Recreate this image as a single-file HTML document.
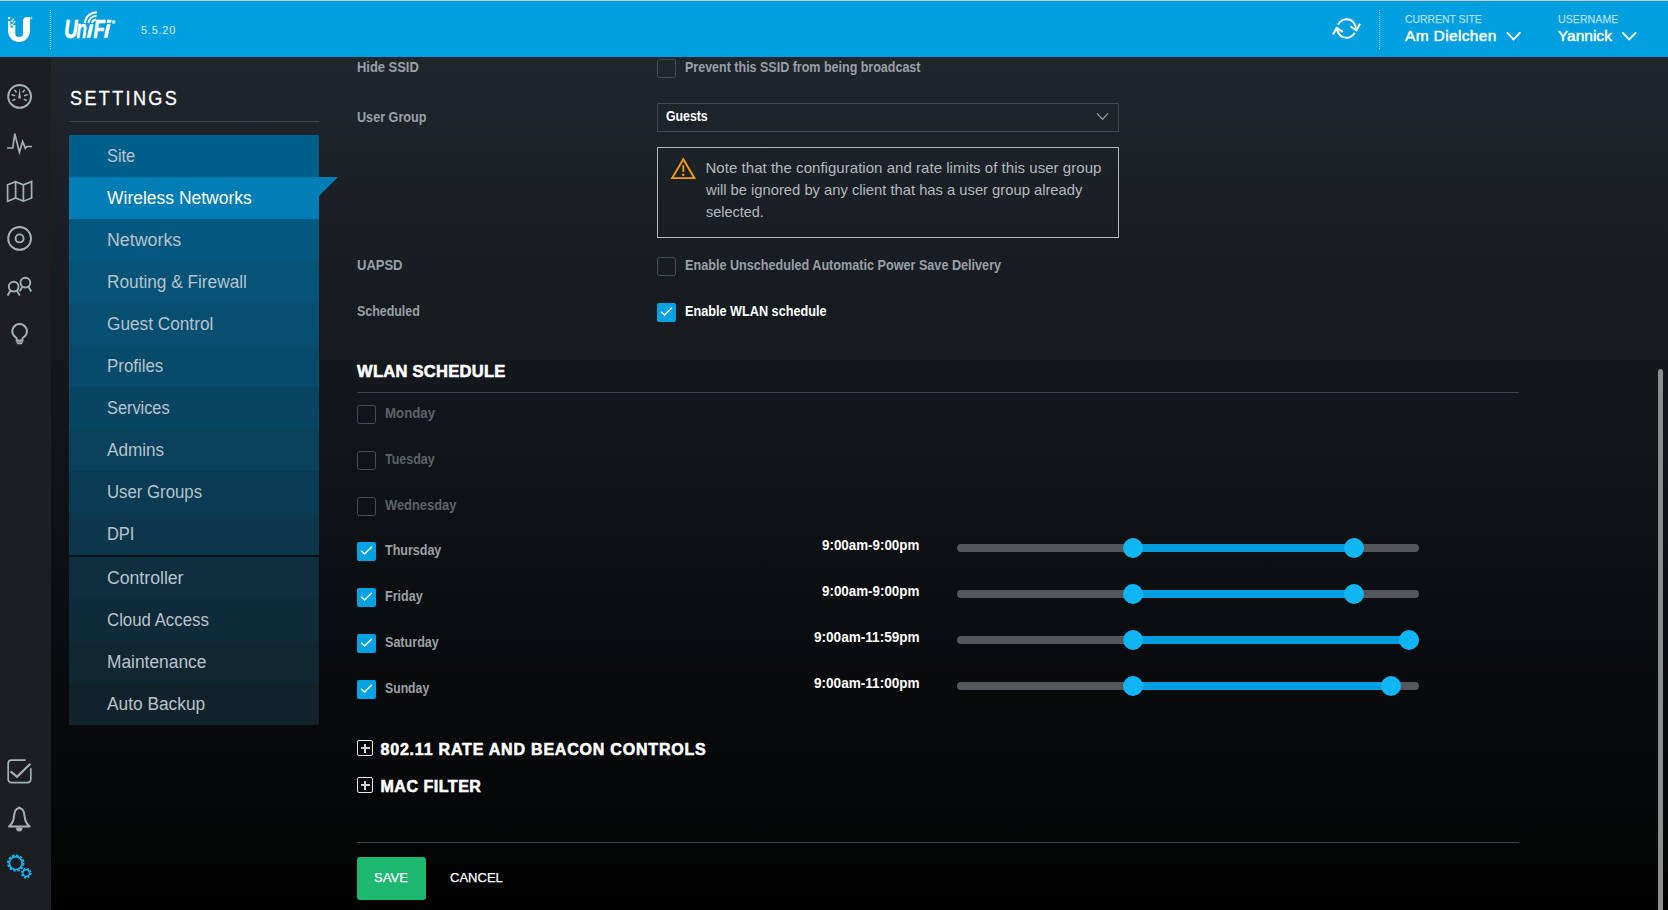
<!DOCTYPE html>
<html><head><meta charset="utf-8"><title>UniFi</title>
<style>
html,body{margin:0;padding:0;width:1668px;height:910px;overflow:hidden;background:#050505;font-family:"Liberation Sans",sans-serif;}
.t{position:absolute;white-space:nowrap;}
#hdr{position:absolute;left:0;top:0;width:1668px;height:57px;background:#00a0e0;border-top:1px solid #c9c9c9;box-sizing:border-box;}
#side{position:absolute;left:0;top:57px;width:51px;height:853px;background:#1c1e22;}
#main{position:absolute;left:51px;top:57px;width:1617px;height:853px;background:linear-gradient(to bottom,#1f262d 0%,#090c0e 70%,#020202 100%);}
.nv{position:absolute;left:69px;width:250px;height:42px;}
.abs{position:absolute;}
.cb{position:absolute;width:17px;height:17px;border:1px solid #424d54;border-radius:2.5px;}
.cbon{position:absolute;width:19px;height:19px;background:#03a2e3;border-radius:2px;}
.hr{position:absolute;height:1px;}
.trk{position:absolute;left:957px;width:462px;height:8px;border-radius:4px;background:#53575c;}
.fill{position:absolute;height:8px;background:#039ee0;}
.knob{position:absolute;width:20px;height:20px;border-radius:10px;background:#10b6f3;}
.cb.dis{border-color:#464c53;}
.plus{position:absolute;width:14px;height:14px;border:1px solid #e8e8e8;border-radius:2px;}
.plus::before{content:"";position:absolute;left:2.5px;top:6.4px;width:9px;height:1.2px;background:#d2d2d2;}
.plus::after{content:"";position:absolute;left:6.4px;top:2.5px;width:1.2px;height:9px;background:#d2d2d2;}

</style></head><body>
<div id="main"></div>
<div id="side"></div>
<div id="hdr"></div>
<div class="nv" style="top:135px;background:#005f88"></div><div class="nv" style="top:177px;background:#007db4"></div><div class="nv" style="top:219px;background:#04587f"></div><div class="nv" style="top:261px;background:#055478"></div><div class="nv" style="top:303px;background:#064f71"></div><div class="nv" style="top:345px;background:#074a6a"></div><div class="nv" style="top:387px;background:#084563"></div><div class="nv" style="top:429px;background:#09405b"></div><div class="nv" style="top:471px;background:#0a3b54"></div><div class="nv" style="top:513px;background:#0b364c"></div><div class="nv" style="top:557px;background:#0e2f40"></div><div class="nv" style="top:599px;background:#0f2a38"></div><div class="nv" style="top:641px;background:#102630"></div><div class="nv" style="top:683px;background:#11222a"></div><div style="position:absolute;left:319px;top:177px;width:0;height:0;border-top:19px solid #007db4;border-right:19px solid transparent"></div>
<div class="hr" style="left:69px;top:121px;width:250px;background:#3d424a"></div>
<div class="abs" style="left:69px;top:555px;width:250px;height:2px;background:#0a1218"></div>

<!-- header icons -->
<svg class="abs" style="left:0;top:0" width="1668" height="57" viewBox="0 0 1668 57">
  <!-- Ubiquiti U -->
  <g fill="#fff">
    <path d="M8,21 H10.5 V27.5 H13 V25 H15.3 V33.2 A3.85,3.85 0 0 0 23,33.2 V21 Q23,17 27.5,17 H30 V31 A11,11 0 0 1 8,31 Z"/>
    <rect x="8" y="17" width="2.2" height="2.2"/>
    <rect x="12.2" y="18.6" width="1.8" height="1.8" opacity=".85"/>
    <rect x="11.2" y="20.4" width="1.6" height="1.6" opacity=".85"/>
    <rect x="13.8" y="20.8" width="1.7" height="1.7" opacity=".85"/>
    <rect x="12.6" y="22.4" width="1.5" height="1.5" opacity=".8"/>
    <rect x="11.2" y="24" width="1.8" height="1.8" opacity=".9"/>
    <rect x="30.4" y="17.2" width="1.8" height="2" opacity=".7"/>
  </g>
  <line x1="50.5" y1="10" x2="50.5" y2="49" stroke="rgba(255,255,255,.6)" stroke-width="1" stroke-dasharray="1 1"/>
  <!-- UniFi -->
  <g fill="#fff" stroke="#fff" stroke-width=".7" stroke-linejoin="round">
    <text x="0" y="0" transform="translate(64.2,37.6) scale(.74,1)" font-family="Liberation Sans" font-weight="700" font-style="italic" font-size="25">U</text>
    <text x="0" y="0" transform="translate(76.6,37.6) scale(.68,1)" font-family="Liberation Sans" font-weight="700" font-style="italic" font-size="25" stroke-width=".5">n</text>
    <text x="0" y="0" transform="translate(93.4,37.6) scale(.74,1)" font-family="Liberation Sans" font-weight="700" font-style="italic" font-size="25">F</text>
    <path d="M87.2,37.6 L90.2,24.6 H93.2 L90.2,37.6 Z"/>
    <path d="M104.2,37.6 L107.2,24.6 H110.2 L107.2,37.6 Z"/>
    <path d="M107,22.6 L107.6,20 H111.3 L110.7,22.6 Z"/>
    <circle cx="113.7" cy="22" r="1.9" opacity=".7" stroke="none"/>
  </g>
  <g fill="none" stroke="#fff" stroke-width="2">
    <path d="M84.6,23 A12.5,12.5 0 0 1 97,12.2"/>
    <path d="M88.3,23 A9,9 0 0 1 96.6,15.8"/>
    <path d="M91.8,23 A5.5,5.5 0 0 1 96.2,19.4"/>
  </g>
  <!-- refresh -->
  <g fill="none" stroke="#fff" stroke-width="2" stroke-linecap="butt" stroke-linejoin="miter">
    <path d="M1338,24.7 A9.3,9.3 0 0 1 1355.7,29.8"/>
    <path d="M1350.3,26.2 L1356.4,30.4 L1360.1,23.7"/>
    <path d="M1354.7,32.9 A9.3,9.3 0 0 1 1337.25,27.5"/>
    <path d="M1333,34.5 L1336.6,27.8 L1342.9,31.8"/>
  </g>
  <line x1="1379.5" y1="10" x2="1379.5" y2="49" stroke="rgba(255,255,255,.6)" stroke-width="1" stroke-dasharray="1 1"/>
  <path d="M1506.8,32.4 L1513.6,39.4 L1520.4,32.4" fill="none" stroke="#fff" stroke-width="1.8"/>
  <path d="M1622.3,32.4 L1629.2,39.4 L1636.1,32.4" fill="none" stroke="#fff" stroke-width="1.8"/>
</svg>

<!-- sidebar icons -->
<svg class="abs" style="left:0;top:57px" width="51" height="853" viewBox="0 57 51 853">
  <g fill="none" stroke="#a4b3b1" stroke-width="1.9">
    <!-- dashboard -->
    <circle cx="19.6" cy="96.4" r="11.4"/>
    <g stroke-width="1.5">
      <line x1="16.6" y1="92.4" x2="14.4" y2="89.8"/>
      <line x1="15.2" y1="95.8" x2="11.6" y2="94.8"/>
      <line x1="15.4" y1="99.2" x2="12.2" y2="100.6"/>
      <line x1="22.6" y1="92.4" x2="24.8" y2="89.8"/>
      <line x1="24" y1="95.8" x2="27.6" y2="94.8"/>
      <line x1="23.8" y1="99.2" x2="27" y2="100.6"/>
    </g>
    <path d="M19.6,88 L21,98.6 H18.2 Z" fill="#a4b3b1" stroke="none"/>
    <!-- pulse -->
    <path d="M7.2,148 H12.8 L14.8,133.6 L19.4,152.2 L22.6,141.6 L25.4,148.4 L27,146.5 H32" stroke-width="1.7" stroke-linejoin="miter"/>
    <!-- map -->
    <path d="M7.6,184.8 L15.6,181.6 L23.4,184.8 L31.6,181.6 V198 L23.4,201.2 L15.6,198 L7.6,201.2 Z M15.6,181.6 V198 M23.4,184.8 V201.2" stroke-width="1.7" stroke-linejoin="miter"/>
    <!-- devices -->
    <circle cx="19.6" cy="238.4" r="11.4"/>
    <circle cx="19.6" cy="238.4" r="4"/>
    <!-- clients -->
    <circle cx="13.7" cy="286.6" r="4.9"/>
    <path d="M10.6,290.6 L7.6,295.4 M16.8,290.6 L19.8,295.4"/>
    <circle cx="25.4" cy="282.6" r="4.9"/>
    <path d="M22.4,286.8 L19.6,291.2 M28.4,286.8 L31.2,291.4"/>
    <!-- bulb -->
    <path d="M16.6,340.4 V338 A7.3,7.3 0 1 1 22.6,338 V340.4 Z" stroke-linejoin="miter"/>
    <path d="M16.2,342 H23 M17,343.6 H22.2" stroke-width="1.4"/>
    <!-- events -->
    <path d="M25.6,760.2 H11.4 A3.2,3.2 0 0 0 8.2,763.4 V779.4 A3.2,3.2 0 0 0 11.4,782.6 H27.6 A3.2,3.2 0 0 0 30.8,779.4 V768.2" stroke-width="1.7"/>
    <path d="M10.6,771.4 L17,776.8 L30.4,763.8" stroke-width="2.2"/>
    <!-- bell -->
    <path d="M19.3,808 C13.5,808.6 14.6,816 13.2,820.4 C12.2,823.6 10.4,825.2 9,826.6 H29.6 C28.2,825.2 26.4,823.6 25.4,820.4 C24,816 25.1,808.6 19.3,808 Z" stroke-width="2" stroke-linejoin="round"/>
    <path d="M16,827.6 A3.3,3.9 0 0 0 22.6,827.6 Z" fill="#a4b3b1" stroke="none"/>
    <path d="M19.3,806.6 V808.4" stroke-width="2"/>
  </g>
  <!-- gears -->
  <g fill="none" stroke="#12b4f4">
    <circle cx="15.8" cy="863.1" r="6.4" stroke-width="1.7"/>
    <circle cx="15.8" cy="863.1" r="7.7" stroke-width="2" stroke-dasharray="2.4 1.632"/>
    <circle cx="26.2" cy="873.1" r="3.3" stroke-width="1.5"/>
    <circle cx="26.2" cy="873.1" r="4.5" stroke-width="1.8" stroke-dasharray="1.95 1.584"/>
  </g>
</svg>

<!-- form controls -->
<div class="cb" style="left:657px;top:59px"></div>
<div class="abs" style="left:657px;top:103px;width:460px;height:27px;border:1px solid #3f4a50"></div>
<svg class="abs" style="left:1094px;top:110px" width="18" height="14" viewBox="1094 110 18 14"><path d="M1097,113.4 L1102.5,119.4 L1108,113.4" fill="none" stroke="#9a9c9e" stroke-width="1.3"/></svg>
<div class="abs" style="left:657px;top:147px;width:460px;height:89px;border:1px solid #b4b8bd"></div>
<svg class="abs" style="left:668px;top:154px" width="32" height="30" viewBox="668 154 32 30">
  <path d="M683.3,159.2 L672.2,178.1 H694.4 Z" fill="none" stroke="#f59c08" stroke-width="1.9" stroke-linejoin="miter"/>
  <path d="M683.3,165.2 V172" stroke="#f59c08" stroke-width="1.8"/>
  <circle cx="683.3" cy="174.7" r="1.2" fill="#f59c08"/>
</svg>
<div class="cb" style="left:657px;top:257px"></div>
<div class="cbon" style="left:657px;top:303px"><svg width="19" height="19" style="display:block"><path d="M4.2,8.7 L7.6,12 L14.9,4.7" fill="none" stroke="#fff" stroke-width="1.5"/></svg></div>

<div class="hr" style="left:357px;top:392px;width:1162px;background:#3b4349"></div>
<div class="cb dis" style="left:357px;top:405px"></div>
<div class="cb dis" style="left:357px;top:451px"></div>
<div class="cb dis" style="left:357px;top:497px"></div>
<div class="cbon" style="left:357px;top:542px"><svg width="19" height="19" style="display:block"><path d="M4.2,8.7 L7.6,12 L14.9,4.7" fill="none" stroke="#fff" stroke-width="1.5"/></svg></div>
<div class="cbon" style="left:357px;top:588px"><svg width="19" height="19" style="display:block"><path d="M4.2,8.7 L7.6,12 L14.9,4.7" fill="none" stroke="#fff" stroke-width="1.5"/></svg></div>
<div class="cbon" style="left:357px;top:634px"><svg width="19" height="19" style="display:block"><path d="M4.2,8.7 L7.6,12 L14.9,4.7" fill="none" stroke="#fff" stroke-width="1.5"/></svg></div>
<div class="cbon" style="left:357px;top:680px"><svg width="19" height="19" style="display:block"><path d="M4.2,8.7 L7.6,12 L14.9,4.7" fill="none" stroke="#fff" stroke-width="1.5"/></svg></div>

<!-- sliders -->
<div class="trk" style="top:544px"></div><div class="fill" style="top:544px;left:1132px;width:222px"></div><div class="knob" style="left:1122.5px;top:538px"></div><div class="knob" style="left:1343.8px;top:538px"></div>
<div class="trk" style="top:590px"></div><div class="fill" style="top:590px;left:1132px;width:222px"></div><div class="knob" style="left:1122.5px;top:584px"></div><div class="knob" style="left:1343.8px;top:584px"></div>
<div class="trk" style="top:636px"></div><div class="fill" style="top:636px;left:1132px;width:277px"></div><div class="knob" style="left:1122.5px;top:630px"></div><div class="knob" style="left:1399.2px;top:630px"></div>
<div class="trk" style="top:682px"></div><div class="fill" style="top:682px;left:1132px;width:259px"></div><div class="knob" style="left:1122.5px;top:676px"></div><div class="knob" style="left:1380.9px;top:676px"></div>

<!-- plus boxes -->
<div class="plus" style="left:357px;top:740px"></div>
<div class="plus" style="left:357px;top:777px"></div>

<div class="hr" style="left:357px;top:842px;width:1162px;background:#3b4349"></div>
<div class="abs" style="left:357px;top:857px;width:69px;height:43px;background:#1cb870;border-radius:3px"></div>

<!-- scrollbar -->
<div class="abs" style="left:1658px;top:369px;width:5px;height:545px;background:#8c8c8c;border-radius:3px"></div>

<div class="t" style="left:141.0px;top:23.4px;font-size:11px;line-height:15px;font-weight:400;color:rgba(255,255,255,.85);letter-spacing:0.741px;">5.5.20</div><div class="t" style="left:1405.0px;top:11.2px;font-size:11.5px;line-height:16px;font-weight:400;color:rgba(255,255,255,.62);letter-spacing:0.000px;transform:scaleX(0.9047);transform-origin:0 50%;-webkit-text-stroke:.25px rgba(255,255,255,.62);">CURRENT SITE</div><div class="t" style="left:1405.0px;top:24.6px;font-size:15.5px;line-height:22px;font-weight:400;color:#fff;letter-spacing:0.353px;-webkit-text-stroke:.45px #fff;">Am Dielchen</div><div class="t" style="left:1557.8px;top:11.2px;font-size:11.5px;line-height:16px;font-weight:400;color:rgba(255,255,255,.62);letter-spacing:0.000px;transform:scaleX(0.9266);transform-origin:0 50%;-webkit-text-stroke:.25px rgba(255,255,255,.62);">USERNAME</div><div class="t" style="left:1557.8px;top:24.6px;font-size:15.5px;line-height:22px;font-weight:400;color:#fff;letter-spacing:0.017px;-webkit-text-stroke:.45px #fff;">Yannick</div><div class="t" style="left:69.5px;top:83.1px;font-size:21px;line-height:29px;font-weight:400;color:#fff;letter-spacing:2.739px;transform:scaleX(0.8600);transform-origin:0 50%;-webkit-text-stroke:.3px #fff;">SETTINGS</div><div class="t" style="left:107.3px;top:143.7px;font-size:18px;line-height:25px;font-weight:400;color:#b9c3cb;letter-spacing:0.000px;transform:scaleX(0.9088);transform-origin:0 50%;">Site</div><div class="t" style="left:107.3px;top:185.7px;font-size:18px;line-height:25px;font-weight:400;color:#fff;letter-spacing:0.000px;transform:scaleX(0.9716);transform-origin:0 50%;">Wireless Networks</div><div class="t" style="left:107.3px;top:227.7px;font-size:18px;line-height:25px;font-weight:400;color:#b9c3cb;letter-spacing:0.000px;transform:scaleX(0.9891);transform-origin:0 50%;">Networks</div><div class="t" style="left:107.3px;top:269.7px;font-size:18px;line-height:25px;font-weight:400;color:#b9c3cb;letter-spacing:0.000px;transform:scaleX(0.9578);transform-origin:0 50%;">Routing &amp; Firewall</div><div class="t" style="left:107.3px;top:311.7px;font-size:18px;line-height:25px;font-weight:400;color:#b9c3cb;letter-spacing:0.000px;transform:scaleX(0.9571);transform-origin:0 50%;">Guest Control</div><div class="t" style="left:107.3px;top:353.7px;font-size:18px;line-height:25px;font-weight:400;color:#b9c3cb;letter-spacing:0.000px;transform:scaleX(0.9378);transform-origin:0 50%;">Profiles</div><div class="t" style="left:107.3px;top:395.7px;font-size:18px;line-height:25px;font-weight:400;color:#b9c3cb;letter-spacing:0.000px;transform:scaleX(0.9068);transform-origin:0 50%;">Services</div><div class="t" style="left:107.3px;top:437.7px;font-size:18px;line-height:25px;font-weight:400;color:#b9c3cb;letter-spacing:0.000px;transform:scaleX(0.9512);transform-origin:0 50%;">Admins</div><div class="t" style="left:107.3px;top:479.7px;font-size:18px;line-height:25px;font-weight:400;color:#b9c3cb;letter-spacing:0.000px;transform:scaleX(0.9319);transform-origin:0 50%;">User Groups</div><div class="t" style="left:107.3px;top:521.7px;font-size:18px;line-height:25px;font-weight:400;color:#b9c3cb;letter-spacing:0.000px;transform:scaleX(0.9129);transform-origin:0 50%;">DPI</div><div class="t" style="left:107.3px;top:565.7px;font-size:18px;line-height:25px;font-weight:400;color:#b9c3cb;letter-spacing:0.000px;transform:scaleX(0.9804);transform-origin:0 50%;">Controller</div><div class="t" style="left:107.3px;top:607.7px;font-size:18px;line-height:25px;font-weight:400;color:#b9c3cb;letter-spacing:0.000px;transform:scaleX(0.9334);transform-origin:0 50%;">Cloud Access</div><div class="t" style="left:107.3px;top:649.7px;font-size:18px;line-height:25px;font-weight:400;color:#b9c3cb;letter-spacing:0.000px;transform:scaleX(0.9643);transform-origin:0 50%;">Maintenance</div><div class="t" style="left:107.3px;top:691.7px;font-size:18px;line-height:25px;font-weight:400;color:#b9c3cb;letter-spacing:0.000px;transform:scaleX(0.9620);transform-origin:0 50%;">Auto Backup</div><div class="t" style="left:357.3px;top:57.0px;font-size:14px;line-height:20px;font-weight:700;color:#9aa0a7;letter-spacing:0.000px;transform:scaleX(0.9237);transform-origin:0 50%;">Hide SSID</div><div class="t" style="left:357.3px;top:107.0px;font-size:14px;line-height:20px;font-weight:700;color:#9aa0a7;letter-spacing:0.000px;transform:scaleX(0.9024);transform-origin:0 50%;">User Group</div><div class="t" style="left:357.3px;top:255.0px;font-size:14px;line-height:20px;font-weight:700;color:#9aa0a7;letter-spacing:0.000px;transform:scaleX(0.9283);transform-origin:0 50%;">UAPSD</div><div class="t" style="left:357.3px;top:301.0px;font-size:14px;line-height:20px;font-weight:700;color:#9aa0a7;letter-spacing:0.000px;transform:scaleX(0.8870);transform-origin:0 50%;">Scheduled</div><div class="t" style="left:684.8px;top:57.0px;font-size:14px;line-height:20px;font-weight:700;color:#9aa0a7;letter-spacing:0.000px;transform:scaleX(0.8929);transform-origin:0 50%;">Prevent this SSID from being broadcast</div><div class="t" style="left:665.7px;top:106.0px;font-size:14px;line-height:20px;font-weight:700;color:#fff;letter-spacing:0.000px;transform:scaleX(0.8785);transform-origin:0 50%;">Guests</div><div class="t" style="left:705.5px;top:156.6px;font-size:15px;line-height:21px;font-weight:400;color:#b4b9bf;letter-spacing:0.038px;">Note that the configuration and rate limits of this user group</div><div class="t" style="left:705.5px;top:178.7px;font-size:15px;line-height:21px;font-weight:400;color:#b4b9bf;letter-spacing:0.000px;transform:scaleX(0.9832);transform-origin:0 50%;">will be ignored by any client that has a user group already</div><div class="t" style="left:705.5px;top:200.9px;font-size:15px;line-height:21px;font-weight:400;color:#b4b9bf;letter-spacing:0.000px;transform:scaleX(0.9626);transform-origin:0 50%;">selected.</div><div class="t" style="left:684.8px;top:255.0px;font-size:14px;line-height:20px;font-weight:700;color:#9aa0a7;letter-spacing:0.000px;transform:scaleX(0.9021);transform-origin:0 50%;">Enable Unscheduled Automatic Power Save Delivery</div><div class="t" style="left:684.8px;top:301.0px;font-size:14px;line-height:20px;font-weight:700;color:#fff;letter-spacing:0.000px;transform:scaleX(0.9050);transform-origin:0 50%;">Enable WLAN schedule</div><div class="t" style="left:357.1px;top:359.5px;font-size:16.5px;line-height:23px;font-weight:700;color:#fff;letter-spacing:0.281px;-webkit-text-stroke:.55px #fff;">WLAN SCHEDULE</div><div class="t" style="left:384.7px;top:403.0px;font-size:14px;line-height:20px;font-weight:700;color:#5d6268;letter-spacing:0.000px;transform:scaleX(0.9472);transform-origin:0 50%;">Monday</div><div class="t" style="left:384.7px;top:449.0px;font-size:14px;line-height:20px;font-weight:700;color:#5d6268;letter-spacing:0.000px;transform:scaleX(0.8912);transform-origin:0 50%;">Tuesday</div><div class="t" style="left:384.7px;top:495.0px;font-size:14px;line-height:20px;font-weight:700;color:#5d6268;letter-spacing:0.000px;transform:scaleX(0.9207);transform-origin:0 50%;">Wednesday</div><div class="t" style="left:384.7px;top:540.0px;font-size:14px;line-height:20px;font-weight:700;color:#9aa0a7;letter-spacing:0.000px;transform:scaleX(0.8934);transform-origin:0 50%;">Thursday</div><div class="t" style="left:384.7px;top:586.0px;font-size:14px;line-height:20px;font-weight:700;color:#9aa0a7;letter-spacing:0.000px;transform:scaleX(0.8949);transform-origin:0 50%;">Friday</div><div class="t" style="left:384.7px;top:632.0px;font-size:14px;line-height:20px;font-weight:700;color:#9aa0a7;letter-spacing:0.000px;transform:scaleX(0.8978);transform-origin:0 50%;">Saturday</div><div class="t" style="left:384.7px;top:678.0px;font-size:14px;line-height:20px;font-weight:700;color:#9aa0a7;letter-spacing:0.000px;transform:scaleX(0.8739);transform-origin:0 50%;">Sunday</div><div class="t" style="left:821.8px;top:535.0px;font-size:14px;line-height:20px;font-weight:700;color:#fff;letter-spacing:0.000px;transform:scaleX(0.9545);transform-origin:0 50%;">9:00am-9:00pm</div><div class="t" style="left:821.8px;top:581.0px;font-size:14px;line-height:20px;font-weight:700;color:#fff;letter-spacing:0.000px;transform:scaleX(0.9545);transform-origin:0 50%;">9:00am-9:00pm</div><div class="t" style="left:813.5px;top:627.0px;font-size:14px;line-height:20px;font-weight:700;color:#fff;letter-spacing:0.000px;transform:scaleX(0.9692);transform-origin:0 50%;">9:00am-11:59pm</div><div class="t" style="left:813.5px;top:673.0px;font-size:14px;line-height:20px;font-weight:700;color:#fff;letter-spacing:0.000px;transform:scaleX(0.9692);transform-origin:0 50%;">9:00am-11:00pm</div><div class="t" style="left:380.5px;top:738.8px;font-size:16px;line-height:22px;font-weight:700;color:#fff;letter-spacing:0.794px;-webkit-text-stroke:.55px #fff;">802.11 RATE AND BEACON CONTROLS</div><div class="t" style="left:380.5px;top:775.8px;font-size:16px;line-height:22px;font-weight:700;color:#fff;letter-spacing:0.524px;-webkit-text-stroke:.55px #fff;">MAC FILTER</div><div class="t" style="left:374.3px;top:867.9px;font-size:13.5px;line-height:19px;font-weight:400;color:#fff;letter-spacing:0.000px;transform:scaleX(0.9710);transform-origin:0 50%;-webkit-text-stroke:.25px #fff;">SAVE</div><div class="t" style="left:450.0px;top:867.9px;font-size:13.5px;line-height:19px;font-weight:400;color:#fff;letter-spacing:0.000px;transform:scaleX(0.9641);transform-origin:0 50%;-webkit-text-stroke:.25px #fff;">CANCEL</div>
</body></html>
